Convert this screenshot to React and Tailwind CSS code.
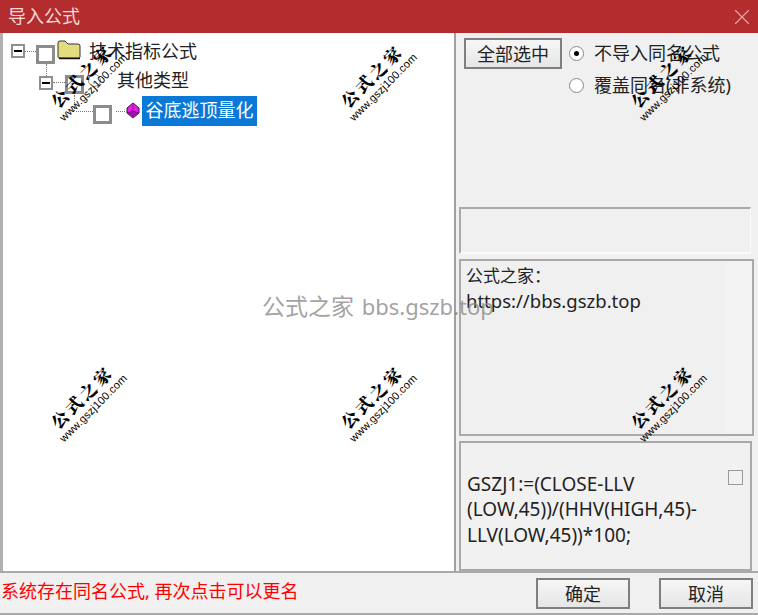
import { X } from "lucide-react";

const cjk = "font-['Noto_Sans','Noto_Sans_CJK_SC',sans-serif]";

const marks = [
  "left-[86px] top-[80px]",
  "left-[376px] top-[80px]",
  "left-[666px] top-[80px]",
  "left-[86px] top-[401px]",
  "left-[376px] top-[401px]",
  "left-[666px] top-[401px]",
];

function Watermark({ pos }) {
  return (
    <div className={`absolute ${pos} w-[100px] -translate-x-1/2 -translate-y-1/2 -rotate-45 text-center text-black pointer-events-none`}>
      <div className="font-['Noto_Serif_CJK_SC','Noto_Sans_CJK_SC',serif] text-[17px] font-black leading-[20px] tracking-[3px] whitespace-nowrap">公式之家</div>
      <div className="font-['Liberation_Sans',sans-serif] text-[11px] leading-[12px] tracking-[0.15px] whitespace-nowrap">www.gszj100.com</div>
    </div>
  );
}

function Expander() {
  return (
    <span className="block w-[14px] h-[14px] border-2 border-[#8f8f8f] bg-white flex items-center justify-center shrink-0">
      <span className="w-[8px] h-[2px] bg-black" />
    </span>
  );
}

function TreeCheck({ className }) {
  return <span className={`block w-[19px] h-[19px] border-[3px] border-[#8c8c8c] bg-white shrink-0 ${className}`} />;
}

function Dots({ className }) {
  return <span className={`block border-t border-dotted border-[#777] shrink-0 ${className}`} />;
}

function Folder() {
  return (
    <svg width="24" height="21" viewBox="0 0 24 21" className="shrink-0 ml-[2px] -mt-[3px]">
      <path d="M1 18V4q0-2 2-2h5l3 3h10q2 0 2 2v11q0 1-2 1H3q-2 0-2-1z" fill="#e3dc7e" stroke="#333" strokeWidth="1" />
      <path d="M2 19.5h21" stroke="#111" strokeWidth="1.5" />
    </svg>
  );
}

function Gem() {
  return (
    <svg width="14" height="17" viewBox="0 0 14 17" className="shrink-0 ml-[1px] -mt-[1px]">
      <path d="M7 1l6 5v5l-6 5-6-5V6z" fill="#e81ee8" stroke="#40104a" strokeWidth="1" />
      <path d="M7 9l6 2-6 5-6-5z" fill="#a012a8" />
      <path d="M7 1v8M7 9l6 2M7 9l-6 2" fill="none" stroke="#5a0e62" strokeWidth="0.6" />
    </svg>
  );
}

function Radio({ checked }) {
  return (
    <span className="w-[15px] h-[15px] rounded-full bg-white border border-[#8a8a8a] flex items-center justify-center shrink-0">
      {checked && <span className="w-[5px] h-[5px] rounded-full bg-black" />}
    </span>
  );
}

function Btn({ children, className }) {
  return (
    <button className={`border-2 border-[#7f7f7f] bg-gradient-to-b from-[#f6f6f6] to-[#e6e6e6] text-[18px] leading-none text-[#222] ${className}`}>
      {children}
    </button>
  );
}

export default function App() {
  return (
    <div className={`relative w-[758px] h-[615px] overflow-hidden bg-[#f0f0f0] text-[#222] ${cjk}`}>
      {/* title bar */}
      <div className="h-[33px] bg-[#b32d2e] flex items-center justify-between pl-[8px] pr-[3px] text-[#f3d9d9] text-[18px]">
        <span>导入公式</span>
        <X size={26} strokeWidth={1} className="text-[#e8a9a9]" />
      </div>

      <div className="flex h-[540px] border-b-2 border-[#a9a9a9]">
        {/* tree */}
        <div className="w-[456px] bg-white border-l-[3px] border-l-[#b0b0b0] border-r-2 border-r-[#a0a0a0] relative pt-[6px] text-[18px] leading-[24px]">
          <span className="absolute left-[43px] top-[31px] h-[12px] border-l border-dotted border-[#777]" />
          <span className="absolute left-[71px] top-[62px] h-[16px] border-l border-dotted border-[#777]" />
          <div className="h-[24px] flex items-center pl-[8px]">
            <Expander />
            <Dots className="w-[11px]" />
            <TreeCheck className="mt-[7px]" />
            <Folder />
            <span className="ml-[8px]">技术指标公式</span>
          </div>
          <div className="h-[24px] flex items-center pl-[36px] mt-[5px]">
            <span className="block mt-[5px]"><Expander /></span>
            <Dots className="w-[12px] mt-[5px]" />
            <TreeCheck className="mt-[9px]" />
            <span className="block w-[13px] h-[13px] rounded-full border border-[#888] ml-[4px]" />
            <span className="ml-[16px]">其他类型</span>
          </div>
          <div className="h-[30px] flex items-center pl-[73px] mt-[4px]">
            <Dots className="w-[17px]" />
            <TreeCheck className="mt-[7px]" />
            <Dots className="w-[9px] ml-[4px]" />
            <Gem />
            <span className="ml-[2px] bg-[#0a78d7] text-white px-[3.5px] h-[30px] leading-[29px]">谷底逃顶量化</span>
          </div>
        </div>

        {/* right column */}
        <div className="w-[302px] flex flex-col pl-[3px] pr-[5px] text-[18px]">
          <div className="h-[174px] flex items-start pt-[5px] pl-[5px] gap-[7px] shrink-0">
            <Btn className="w-[98px] h-[31px] shrink-0">全部选中</Btn>
            <div className="flex flex-col gap-[12px] pt-[5px]">
              <label className="flex items-center gap-[10px] h-[20px] whitespace-nowrap"><Radio checked />不导入同名公式</label>
              <label className="flex items-center gap-[10px] h-[20px] whitespace-nowrap"><Radio />覆盖同名(非系统)</label>
            </div>
          </div>
          <div className="h-[47px] shrink-0 mr-[2px] border-t-2 border-l-2 border-[#a9a9a9] border-r border-r-[#fafafa] border-b-2 border-b-[#fafafa]" />
          <div className="h-[177px] shrink-0 mt-[5px] -mr-[1px] border-2 border-[#a9a9a9] pl-[5px] pt-[2px] leading-[25px] bg-gradient-to-r from-[#f0f0f0] from-[91%] to-[#f3f3f3] to-[91%]">
            <div className="text-[17px]">公式之家：</div>
            <div className="text-[18.5px]">https://bbs.gszb.top</div>
          </div>
          <div className="flex-1 mt-[5px] mr-[1px] border-2 border-[#a9a9a9] relative flex items-center pl-[6px] pr-[24px] leading-[25.5px] bg-[#f1f1f1]">
            <div className="pt-[8px] text-[19px]">GSZJ1:=(CLOSE-LLV (LOW,45))/(HHV(HIGH,45)-LLV(LOW,45))*100;</div>
            <span className="absolute right-[7px] top-[27px] w-[15px] h-[15px] border border-[#9a9a9a]" />
          </div>
        </div>
      </div>

      {/* footer */}
      <div className="h-[42px] flex items-center justify-between pl-[1px] pr-[5px] border-b-2 border-[#a9a9a9]">
        <span className="text-[#f00] text-[18px] -mt-[4px]">系统存在同名公式, 再次点击可以更名</span>
        <div className="flex gap-[29px] mt-[1px]">
          <Btn className="w-[94px] h-[31px]">确定</Btn>
          <Btn className="w-[94px] h-[31px]">取消</Btn>
        </div>
      </div>

      {/* watermarks */}
      {marks.map((pos) => (
        <Watermark key={pos} pos={pos} />
      ))}
      <div className="absolute left-[262px] top-[291px] leading-[30px] text-[#8a8a8a]/80 whitespace-nowrap">
        <span className="text-[23px]">公式之家</span>
        <span className="text-[22px] ml-[2px]"> bbs.gszb.top</span>
      </div>
    </div>
  );
}
